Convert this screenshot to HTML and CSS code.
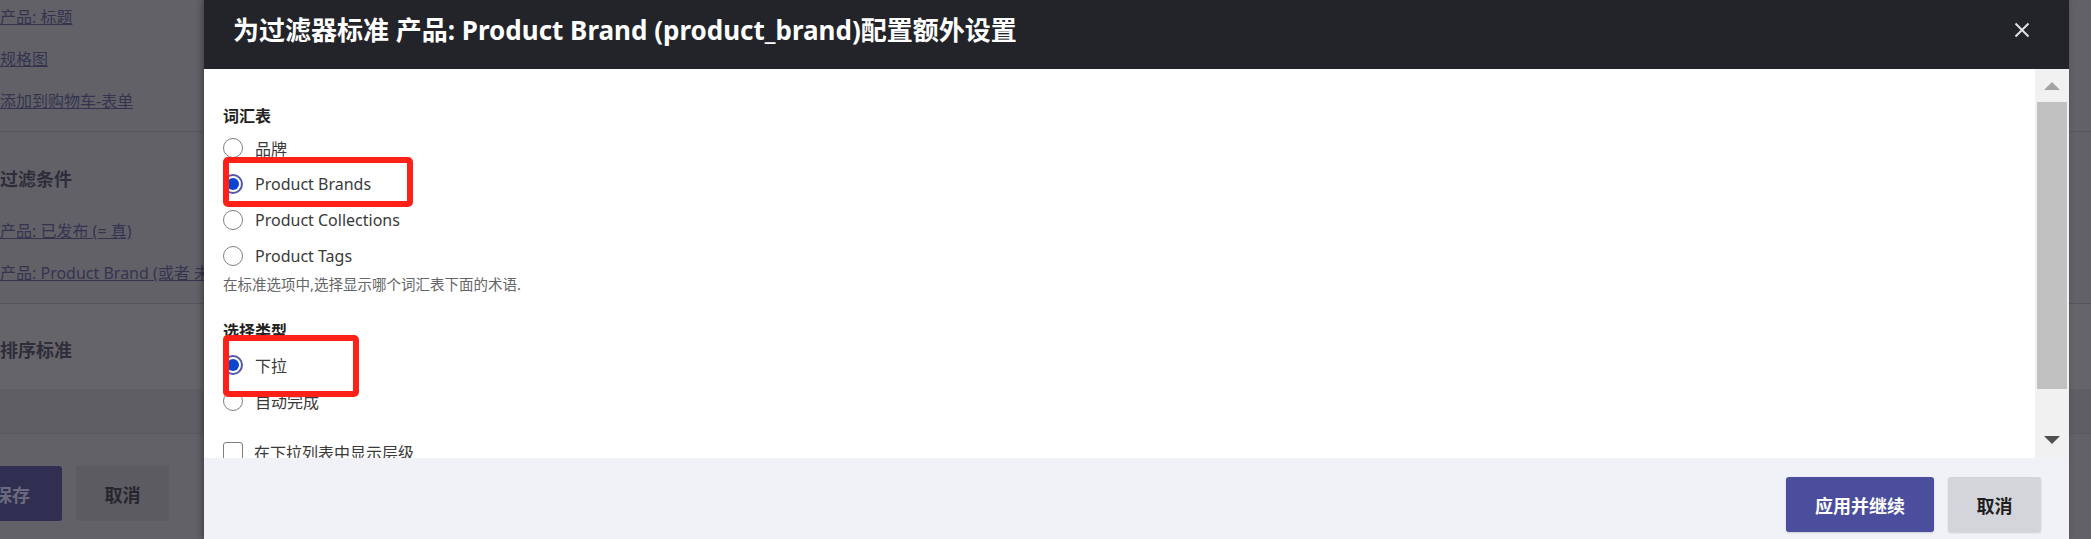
FILE: index.html
```html
<!DOCTYPE html>
<html>
<head>
	<meta charset="utf-8">
	<title>配置额外设置</title>
	<link rel="stylesheet" href="styles.css">
</head>
<body>
	<div class='backdrop'>
		<div class='bg_links'>
			<a href='#'>产品: 标题</a>
			<a href='#'>规格图</a>
			<a href='#'>添加到购物车-表单</a>
		</div>
		<div class='bg_section'>
			<div class='bg_heading'>过滤条件</div>
			<div class='bg_items'>
				<a href='#'>产品: 已发布 (= 真)</a>
				<a href='#'>产品: Product Brand (或者 未指定)</a>
			</div>
		</div>
		<div class='bg_sort'>
			<div class='bg_heading'>排序标准</div>
		</div>
		<div class='bg_spacer'></div>
		<div class='bg_actions'>
			<span class='bg_save'>保存</span>
			<span class='bg_cancel'>取消</span>
		</div>
	</div>

	<div class='modal'>
		<div class='modal_header'>
			<div class='modal_title'>为过滤器标准 产品: Product Brand (product_brand)配置额外设置</div>
			<svg class='close_icon' width='16' height='16' viewBox='0 0 16 16'>
				<path d='M1.5 1.5 L14.5 14.5 M14.5 1.5 L1.5 14.5' stroke='#e2e2e4' stroke-width='2' fill='none'/>
			</svg>
		</div>

		<div class='modal_body'>
			<div class='modal_content'>
				<div class='field_label'>词汇表</div>
				<div class='option'><span class='radio'></span>品牌</div>
				<div class='option'><span class='radio checked'></span>Product Brands</div>
				<div class='option'><span class='radio'></span>Product Collections</div>
				<div class='option'><span class='radio'></span>Product Tags</div>
				<div class='help_text'>在标准选项中,选择显示哪个词汇表下面的术语.</div>

				<div class='field_label second'>选择类型</div>
				<div class='option'><span class='radio checked'></span>下拉</div>
				<div class='option'><span class='radio'></span>自动完成</div>

				<div class='option checkbox_row'><span class='checkbox'></span>在下拉列表中显示层级</div>

				<!-- annotation marks from the screenshot -->
				<div class='mark mark_brands'></div>
				<div class='mark mark_dropdown'></div>
			</div>
			<div class='scrollbar'>
				<span class='arrow_up'></span>
				<span class='thumb'></span>
				<span class='arrow_down'></span>
			</div>
		</div>

		<div class='modal_footer'>
			<span class='btn btn_primary'>应用并继续</span>
			<span class='btn btn_cancel'>取消</span>
		</div>
	</div>
</body>
</html>
```

FILE: styles.css
```css
body { margin: 0; width: 2091px; height: 539px; overflow: hidden; background-color: #626168; font-family: "Noto Sans", "Noto Sans CJK SC", sans-serif; position: relative; }

/* page behind the dialog, already dimmed */
.backdrop { display: flex; flex-direction: column; color: #2e2d3a; }
.backdrop a { color: #35344f; text-decoration: underline; font-size: 16px; line-height: 20px; white-space: nowrap; }
.bg_links { display: flex; flex-direction: column; align-items: flex-start; gap: 22px; padding: 7px 0 20px; border-bottom: 1px solid #58575d; }
.bg_section { padding: 35px 0 20px; border-bottom: 1px solid #58575d; }
.bg_heading { font-size: 18px; font-weight: bold; line-height: 24px; }
.bg_items { display: flex; flex-direction: column; align-items: flex-start; gap: 22px; margin-top: 30px; }
.bg_sort { height: 85px; padding-top: 34px; box-sizing: border-box; background-color: #656469; box-shadow: 0 2px 3px rgba(0,0,0,0.15); }
.bg_spacer { height: 44px; border-bottom: 1px solid #5b5a60; background-color: #5f5e64; }
.bg_actions { display: flex; gap: 14px; margin-top: 32px; }
.bg_save, .bg_cancel { height: 55px; display: flex; align-items: center; justify-content: center; font-size: 18px; font-weight: bold; border-radius: 3px; }
.bg_save { width: 100px; margin-left: -38px; background-color: #302f51; color: #6a6a7e; }
.bg_cancel { width: 93px; background-color: #5c5b61; color: #27262e; }

/* dialog */
.modal { position: absolute; left: 204px; top: 0; width: 1865px; height: 539px; display: flex; flex-direction: column; background-color: #f1f2f7; box-shadow: -2px 0 6px rgba(0,0,0,0.35); }
.modal_header { height: 69px; flex: none; display: flex; align-items: center; justify-content: space-between; padding: 0 39px 9px 29px; box-sizing: border-box; background-color: #232429; }
.modal_title { color: #fff; font-size: 26px; font-weight: bold; line-height: 30px; white-space: nowrap; }
.close_icon { display: block; }

.modal_body { height: 389px; flex: none; display: flex; background-color: #fff; }
.modal_content { flex: 1; position: relative; overflow: hidden; padding: 36px 19px 0; color: #333; }
.field_label { font-size: 16px; font-weight: bold; line-height: 22px; color: #222; margin-bottom: 3px; }
.field_label.second { margin-top: 26px; margin-bottom: 5px; }
.option { height: 36px; display: flex; align-items: center; font-size: 16px; color: #3a3a3a; }
.radio { width: 20px; height: 20px; box-sizing: border-box; border: 1px solid #808080; border-radius: 50%; margin-right: 12px; flex: none; }
.radio.checked { border: 2px solid #5357a9; padding: 2px; }
.radio.checked::after { content: ''; display: block; width: 12px; height: 12px; border-radius: 50%; background-color: #0a46cf; }
.help_text { font-size: 14.5px; line-height: 20px; color: #666; }
.checkbox_row { margin-top: 15px; }
.checkbox { width: 20px; height: 20px; box-sizing: border-box; border: 1px solid #808080; border-radius: 3px; margin-right: 11px; flex: none; }

.mark { position: absolute; left: 19px; border: 6px solid #fe2118; border-radius: 5px; box-sizing: border-box; }
.mark_brands { top: 88px; width: 190px; height: 50px; }
.mark_dropdown { top: 266px; width: 136px; height: 62px; }

.scrollbar { width: 34px; flex: none; display: flex; flex-direction: column; align-items: center; background-color: #f1f1f1; }
.arrow_up { margin-top: 13px; border-left: 8px solid transparent; border-right: 8px solid transparent; border-bottom: 8px solid #a3a3a3; }
.thumb { width: 30px; height: 287px; margin-top: 12px; background-color: #c1c1c1; }
.arrow_down { margin-top: 47px; border-left: 8px solid transparent; border-right: 8px solid transparent; border-top: 8px solid #505050; }

.modal_footer { flex: 1; display: flex; justify-content: flex-end; align-items: flex-start; gap: 14px; padding: 19px 28px 0; }
.btn { height: 55px; display: flex; align-items: center; justify-content: center; font-size: 18px; font-weight: bold; border-radius: 3px; box-shadow: 0 1px 2px rgba(0,0,0,0.15); }
.btn_primary { width: 148px; background-color: #4a4e9d; color: #fff; }
.btn_cancel { width: 93px; background-color: #d4d5da; color: #1e1e1e; }
```
